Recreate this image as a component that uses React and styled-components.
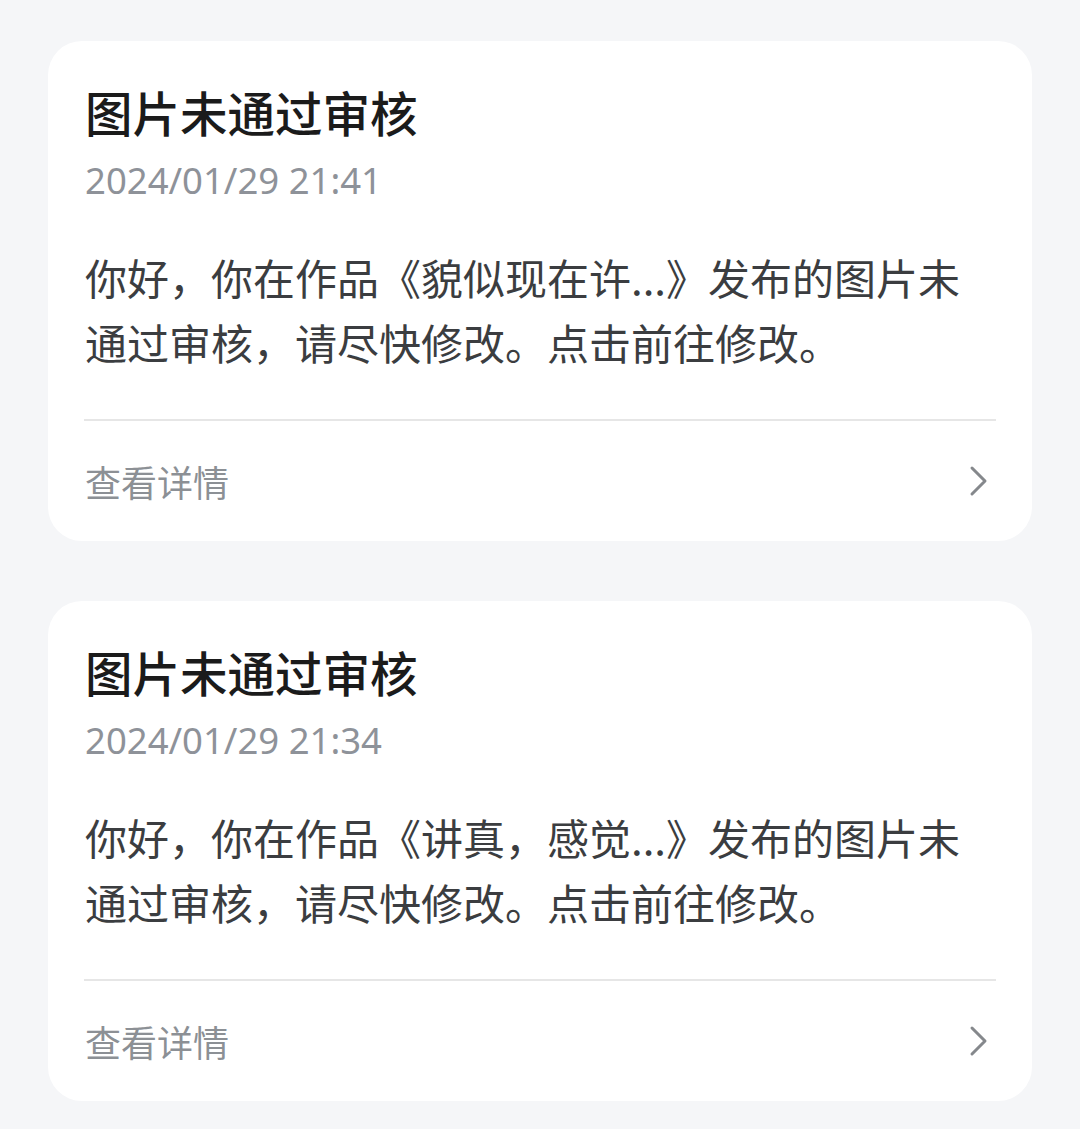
import React from "react";
import styled, { createGlobalStyle } from "styled-components";

const Global = createGlobalStyle`
  html, body { margin: 0; padding: 0; background: #f5f6f8; }
  body { font-family: "Noto Sans CJK SC", "Noto Sans", sans-serif; }
`;

const Page = styled.div`
  display: flex;
  flex-direction: column;
  gap: 60px;
  padding: 41px 48px 29px 48px;
`;

const Card = styled.div`
  background: #ffffff;
  border-radius: 34px;
  padding: 42px 36px 0 36px;
  display: flex;
  flex-direction: column;
`;

const Title = styled.div`
  font-size: 47.5px;
  line-height: 58px;
  font-weight: 500;
  color: #1b1b1b;
  margin-left: 1px;
`;

const DateText = styled.div`
  margin-top: 15px;
  font-size: 36.5px;
  line-height: 48px;
  color: #8e9299;
  font-family: "Noto Sans", "Noto Sans CJK SC", sans-serif;
  margin-left: 1px;
`;

const Body = styled.div`
  margin-top: 40px;
  font-size: 42px;
  line-height: 65px;
  color: #3b3d40;
  margin-left: 1px;
`;

const Divider = styled.div`
  margin-top: 45px;
  height: 2px;
  background: #e6e6e6;
`;

const Footer = styled.div`
  height: 120px;
  display: flex;
  align-items: center;
  justify-content: space-between;
`;

const FooterLabel = styled.span`
  font-size: 36px;
  color: #8c9095;
  margin-left: 1px;
`;

const Chevron = () => (
  <svg width="22" height="32" viewBox="0 0 22 32" style={{ marginRight: 6 }}>
    <polyline
      points="4,3 17,16 4,29"
      fill="none"
      stroke="#85888c"
      strokeWidth="3"
      strokeLinecap="round"
      strokeLinejoin="round"
    />
  </svg>
);

const items = [
  { time: "2024/01/29 21:41", work: "貌似现在许..." },
  { time: "2024/01/29 21:34", work: "讲真，感觉..." },
];

export default function App() {
  return (
    <>
      <Global />
      <Page>
        {items.map((it) => (
          <Card key={it.time}>
            <Title>图片未通过审核</Title>
            <DateText>{it.time}</DateText>
            <Body>
              你好，你在作品《{it.work}》发布的图片未
              <br />
              通过审核，请尽快修改。点击前往修改。
            </Body>
            <Divider />
            <Footer>
              <FooterLabel>查看详情</FooterLabel>
              <Chevron />
            </Footer>
          </Card>
        ))}
      </Page>
    </>
  );
}
